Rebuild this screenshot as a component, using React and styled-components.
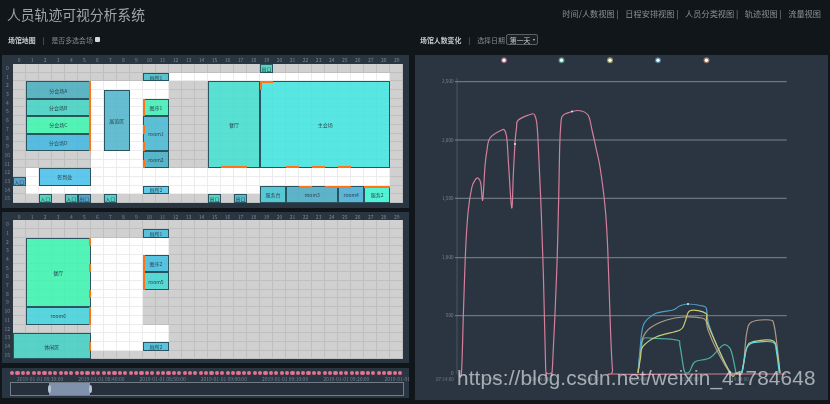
import React from "react";
import styled, { createGlobalStyle } from "styled-components";

const GlobalStyle = createGlobalStyle`
  html, body {
    margin: 0;
    padding: 0;
    background: #11161a;
  }
  * {
    box-sizing: border-box;
  }
`;

const Page = styled.div`
  width: 830px;
  height: 404px;
  overflow: hidden;
  background: #11161a;
  font-family: "Noto Sans CJK SC", "Liberation Sans", sans-serif;
  filter: blur(0.6px);
`;

const Header = styled.header`
  display: flex;
  justify-content: space-between;
  align-items: flex-start;
  height: 27px;
  padding: 4px 9px 0 7px;
`;

const Title = styled.h1`
  margin: 0;
  font-size: 13.8px;
  line-height: 21px;
  font-weight: 400;
  color: #a0a5a8;
`;

const Nav = styled.nav`
  display: flex;
  gap: 6.6px;
  padding-top: 1px;
  font-size: 8.2px;
  line-height: 16px;
  color: #8b9094;
`;

const Body = styled.div`
  display: grid;
  grid-template-columns: 415px 413px;
`;

const Column = styled.section`
  display: flex;
  flex-direction: column;
  padding-left: ${(p) => p.$inset || 0}px;
`;

const SubBar = styled.div`
  display: flex;
  align-items: center;
  height: 28px;
  padding: 0 0 3px ${(p) => p.$pad}px;
  font-size: 6.9px;
  color: #85898d;
`;

const SubTitle = styled.b`
  font-weight: 700;
  color: #c3c7ca;
`;

const Divider = styled.span`
  margin: 0 7px;
  color: #82878b;
`;

const Check = styled.span`
  width: 5px;
  height: 5px;
  margin-left: 2px;
  border-radius: 1px;
  background: #d6d9db;
`;

const DateSelect = styled.span`
  display: flex;
  align-items: center;
  gap: 3px;
  height: 11px;
  margin-left: 1px;
  padding: 0 2px 0 3px;
  border: 1px solid #5b6064;
  border-radius: 2px;
  background: #1b1f22;
  color: #c3c7ca;
  &::after {
    content: "";
    border: 1.5px solid transparent;
    border-top: 2px solid #ccc;
    border-bottom: 0;
  }
`;

const Panel = styled.div`
  width: 407px;
  padding-bottom: ${(p) => p.$bottom}px;
  margin-bottom: ${(p) => p.$gap}px;
  background: #2a3542;
`;

const Board = styled.div`
  display: grid;
  grid-template-columns: 10.7px 390.6px;
  grid-template-rows: ${(p) => p.$head}px 139px;
`;

const ColLabels = styled.div`
  grid-column: 2;
  grid-row: 1;
  display: grid;
  grid-template-columns: repeat(30, 1fr);
  font-size: 5px;
  line-height: 10px;
  text-align: center;
  color: #7b8794;
`;

const RowLabels = styled.div`
  grid-column: 1;
  grid-row: 2;
  display: grid;
  grid-template-rows: repeat(16, 1fr);
  font-size: 5px;
  line-height: 8.69px;
  text-align: center;
  color: #7b8794;
`;

const CellLayer = styled.div`
  grid-column: 2;
  grid-row: 2;
  display: grid;
  grid-template-columns: repeat(30, 1fr);
  grid-template-rows: repeat(16, 1fr);
`;

const Cell = styled.i`
  display: block;
  background: ${(p) => (p.$open ? "#ffffff" : "#d0d0d0")};
  border-right: 1px solid ${(p) => (p.$open ? "#ececec" : "#bfbfbf")};
  border-bottom: 1px solid ${(p) => (p.$open ? "#ececec" : "#bfbfbf")};
`;

const RoomLayer = styled(CellLayer)``;

const Room = styled.div`
  grid-column: ${(p) => p.$c + 1} / span ${(p) => p.$w};
  grid-row: ${(p) => p.$r + 1} / span ${(p) => p.$h};
  display: flex;
  align-items: center;
  justify-content: center;
  overflow: hidden;
  border: 1px solid #2a5560;
  background: ${(p) => p.$color};
  font-size: 5px;
  white-space: nowrap;
  color: #2a4650;
`;

const Door = styled.div`
  grid-column: ${(p) => p.$c + 1} / span ${(p) => p.$w || 1};
  grid-row: ${(p) => p.$r + 1} / span ${(p) => p.$h || 1};
  z-index: 1;
  background: #ff7414;
  ${(p) => p.$side === "right" && "justify-self: end; width: 2px;"}
  ${(p) => p.$side === "left" && "justify-self: start; width: 2px;"}
  ${(p) => p.$side === "top" && "align-self: start; height: 2px;"}
  ${(p) => p.$side === "bottom" && "align-self: end; height: 2px;"}
`;

const TimePanel = styled.div`
  width: 407px;
  height: 30px;
  padding: 3px 6px 0 8px;
  background: #2a3542;
`;

const Dots = styled.div`
  display: flex;
  justify-content: space-between;
  height: 5px;
`;

const Dot = styled.i`
  width: 4.2px;
  height: 4.2px;
  border-radius: 50%;
  background: #e8728e;
`;

const TimeLabels = styled.div`
  display: flex;
  gap: 15px;
  height: 6px;
  padding-left: 7px;
  font-size: 5px;
  line-height: 6px;
  white-space: nowrap;
  color: #75818e;
`;

const Track = styled.div`
  position: relative;
  width: 394px;
  height: 14px;
  border: 1px solid #727c88;
  background: #25303c;
`;

const Range = styled.div`
  position: absolute;
  left: 38px;
  top: 0;
  width: 41px;
  height: 12px;
  background: #7f91ab;
  &::before,
  &::after {
    content: "";
    position: absolute;
    top: 2px;
    width: 3px;
    height: 8px;
    border-radius: 50%;
    background: #b8c4d4;
  }
  &::before {
    left: -1.5px;
  }
  &::after {
    right: -1.5px;
  }
`;

const ChartPanel = styled.div`
  position: relative;
  width: 413px;
  height: 345px;
  background: #2a3541;
`;

const ChartSvg = styled.svg`
  display: block;
  width: 413px;
  height: 345px;
`;

const Watermark = styled.div`
  position: absolute;
  left: 42px;
  top: 311px;
  font-family: "Liberation Sans", sans-serif;
  font-size: 20.7px;
  line-height: 24px;
  letter-spacing: 0.18px;
  white-space: nowrap;
  color: rgba(224, 228, 232, 0.68);
`;

const COLS = Array.from({ length: 30 }, (_, i) => i);
const ROWS = Array.from({ length: 16 }, (_, i) => i);

// rooms let the map grid show through a little
const teal = (hex) => `${hex}d4`;

const floorOne = {
  head: 9,
  bottom: 5,
  gap: 4,
  open: [
    [12, 1, 17, 1],
    [6, 2, 6, 2],
    [6, 4, 4, 8],
    [1, 12, 28, 2],
    [1, 14, 18, 1],
  ],
  rooms: [
    ["分会场A", 1, 2, 5, 2, "#46b0c2"],
    ["分会场B", 1, 4, 5, 2, "#40d6c4"],
    ["分会场C", 1, 6, 5, 2, "#38fab0"],
    ["分会场D", 1, 8, 5, 2, "#40b8e4"],
    ["展览区", 7, 3, 2, 7, "#46b0c8"],
    ["厕所1", 10, 1, 2, 1, "#40c0ce"],
    ["图序1", 10, 4, 2, 2, "#3cf4b8"],
    ["room1", 10, 6, 2, 4, "#46bcd6"],
    ["room2", 10, 10, 2, 2, "#40aec6"],
    ["餐厅", 15, 2, 4, 10, "#40e4d2"],
    ["主会场", 19, 2, 10, 10, "#40eae6"],
    ["出口", 19, 0, 1, 1, "#40d6bc"],
    ["签到处", 2, 12, 4, 2, "#40bce8"],
    ["入口", 0, 13, 1, 1, "#4098c8"],
    ["入口", 2, 15, 1, 1, "#40d6b4"],
    ["入口", 4, 15, 1, 1, "#40c6bc"],
    ["出口", 5, 15, 1, 1, "#4098c8"],
    ["入口", 7, 15, 1, 1, "#40cec6"],
    ["出口", 15, 15, 1, 1, "#40d6bc"],
    ["出口", 17, 15, 1, 1, "#40b4c6"],
    ["厕所2", 10, 14, 2, 1, "#40c0e4"],
    ["服务台", 19, 14, 2, 2, "#40c6d6"],
    ["room3", 21, 14, 4, 2, "#46aec8"],
    ["room4", 25, 14, 2, 2, "#46b0da"],
    ["服务2", 27, 14, 2, 2, "#38fad6"],
  ],
  doors: [
    ["right", 5, 2, 1, 8],
    ["left", 10, 4, 1, 2],
    ["left", 10, 7, 1, 1],
    ["left", 10, 9, 1, 1],
    ["left", 10, 11, 1, 1],
    ["top", 19, 2, 1, 1],
    ["left", 19, 2, 1, 1],
    ["bottom", 16, 11, 2, 1],
    ["bottom", 21, 11, 1, 1],
    ["bottom", 23, 11, 1, 1],
    ["bottom", 25, 11, 1, 1],
    ["top", 22, 14, 1, 1],
    ["top", 24, 14, 2, 1],
    ["top", 27, 14, 2, 1],
  ],
};

const floorTwo = {
  head: 8.3,
  bottom: 3.7,
  gap: 5,
  open: [
    [6, 2, 6, 2],
    [6, 4, 4, 8],
    [6, 12, 6, 2],
    [6, 14, 4, 1],
  ],
  rooms: [
    ["厕所1", 10, 1, 2, 1, "#40bce0"],
    ["餐厅", 1, 2, 5, 8, "#38fab2"],
    ["room6", 1, 10, 5, 2, "#40d6e0"],
    ["休闲区", 0, 13, 6, 3, "#40d2c4"],
    ["图序2", 10, 4, 2, 2, "#40c0e4"],
    ["room5", 10, 6, 2, 2, "#40dad2"],
    ["厕所2", 10, 14, 2, 1, "#40c0e4"],
  ],
  doors: [
    ["right", 5, 2, 1, 1],
    ["right", 5, 5, 1, 1],
    ["right", 5, 8, 1, 1],
    ["right", 5, 10, 1, 2],
    ["right", 5, 14, 1, 1],
    ["left", 10, 4, 1, 4],
  ],
};

const isOpen = (open, c, r) =>
  open.some(([x, y, w, h]) => c >= x && c < x + w && r >= y && r < y + h);

const Floor = ({ data }) => (
  <Panel $bottom={data.bottom} $gap={data.gap}>
    <Board $head={data.head}>
      <ColLabels>
        {COLS.map((c) => (
          <span key={c}>{c}</span>
        ))}
      </ColLabels>
      <RowLabels>
        {ROWS.map((r) => (
          <span key={r}>{r}</span>
        ))}
      </RowLabels>
      <CellLayer>
        {ROWS.map((r) =>
          COLS.map((c) => <Cell key={`${r}-${c}`} $open={isOpen(data.open, c, r)} />)
        )}
      </CellLayer>
      <RoomLayer>
        {data.rooms.map(([name, c, r, w, h, color]) => (
          <Room key={`${name}-${c}-${r}`} $c={c} $r={r} $w={w} $h={h} $color={teal(color)}>
            {name}
          </Room>
        ))}
        {data.doors.map(([side, c, r, w, h]) => (
          <Door key={`${side}-${c}-${r}`} $side={side} $c={c} $r={r} $w={w} $h={h} />
        ))}
      </RoomLayer>
    </Board>
  </Panel>
);

// chart points are in page pixels, the svg viewBox starts at the panel corner
const smooth = (pts) => {
  let d = `M${pts[0][0]} ${pts[0][1]}`;
  for (let i = 0; i < pts.length - 1; i++) {
    const a = pts[i - 1] || pts[i];
    const b = pts[i];
    const c = pts[i + 1];
    const e = pts[i + 2] || c;
    const x1 = b[0] + (c[0] - a[0]) / 6;
    const y1 = b[1] + (c[1] - a[1]) / 6;
    const x2 = c[0] - (e[0] - b[0]) / 6;
    const y2 = c[1] - (e[1] - b[1]) / 6;
    d += ` C${x1.toFixed(1)} ${y1.toFixed(1)} ${x2.toFixed(1)} ${y2.toFixed(1)} ${c[0]} ${c[1]}`;
  }
  return d;
};

const pink = [
  [459, 374], [461.5, 372], [463.5, 310], [465.7, 248], [468.3, 210], [471.7, 188], [474.5, 181],
  [477.7, 178], [480.7, 183], [482.7, 200], [485, 166], [487, 150], [490, 138], [501.7, 130],
  [505, 131], [507, 140], [508.6, 165], [511.7, 208], [513.3, 175], [515, 143], [516.5, 128],
  [518.3, 120], [531.7, 114], [535, 116], [537, 125], [538.5, 150], [541, 206], [543.3, 272],
  [545.6, 366], [547, 373], [551, 373], [552.5, 366], [556.7, 272], [558.5, 206], [559.6, 150],
  [561, 122], [562.5, 116], [566, 113.5], [578, 110.5], [588, 115], [592, 130], [596, 148],
  [600, 167], [605, 206], [607.7, 248], [610.5, 330], [612.5, 370], [615, 374], [700, 374],
  [786, 374],
];
const blue = [
  [638, 373], [640, 350], [641.7, 333], [645, 322], [656.7, 313], [673, 310], [680, 305.7],
  [688, 304], [700, 305.5], [706, 307.5], [707.5, 318], [710, 328], [720, 353], [730, 371.7],
  [735, 373],
];
const peach = [
  [638, 373], [640.5, 350], [642.7, 338], [650, 328], [666.7, 320], [683, 317], [701.7, 318],
  [706, 321], [708, 330], [716.7, 350], [730, 372.7], [736, 373], [741.7, 373], [744, 360],
  [746.7, 333], [751.7, 322], [770, 320], [774, 325], [777, 345], [780, 373],
];
const yellow = [
  [638, 373], [640.5, 358], [642.7, 346.7], [656.7, 336.7], [680, 330], [685, 322], [690, 310.7],
  [706, 313.5], [708, 325], [730, 372.7], [736, 373], [741.7, 373], [746.7, 348], [753, 341.7],
  [773, 340.7], [777, 352], [780, 373],
];
const green = [
  [638, 373], [641, 350], [643.3, 339], [650, 338], [676.7, 340], [680, 346], [684, 370],
  [687, 373], [690, 371], [695, 361.7], [710, 357.7], [723.3, 345], [730, 348.3], [733, 358],
  [736, 373],
];
const cyan = [
  [741.7, 373], [744.5, 358], [746.7, 348], [753, 342.7], [773, 342.3], [776.5, 352], [779.3, 373],
];

const grid = [
  ["2,500", 81.7],
  ["2,000", 140],
  ["1,500", 198.3],
  ["1,000", 257.7],
  ["500", 315.7],
];

const legend = [
  [504, "#e88aa5"],
  [561.5, "#6fdcc0"],
  [610, "#e6e27c"],
  [658, "#6fb8e8"],
  [706.5, "#e8b08c"],
];

const axisTimes = [
  [445, "07:14:00"],
  [492, "08:24:00"],
  [540, "09:34:00"],
  [590, "10:44:00"],
  [640, "11:54:00"],
  [690, "13:04:00"],
  [740, "14:14:00"],
];

const Chart = () => (
  <ChartSvg viewBox="415 55 413 345">
    {legend.map(([x, color]) => (
      <g key={x}>
        <circle cx={x} cy={60.3} r={3} fill={color} opacity={0.55} />
        <circle cx={x} cy={60.3} r={1.7} fill="#ffffff" />
      </g>
    ))}
    <line x1={457} y1={78} x2={457} y2={374} stroke="#4c5763" strokeWidth={1} />
    {grid.map(([label, y]) => (
      <g key={label}>
        <line x1={455} y1={y} x2={786.7} y2={y} stroke="#7c858f" strokeWidth={1} />
        <text x={453.5} y={y + 1.5} fontSize={4.6} textAnchor="end" fill="#79838e">
          {label}
        </text>
      </g>
    ))}
    <text x={453.5} y={375} fontSize={4.6} textAnchor="end" fill="#79838e">
      0
    </text>
    {axisTimes.map(([x, label]) => (
      <text key={x} x={x} y={381} fontSize={4.6} textAnchor="middle" fill="#6f7a86">
        {label}
      </text>
    ))}
    <g fill="none" strokeWidth={1.2} strokeLinejoin="round">
      <path d={smooth(green)} stroke="#4fb09c" />
      <path d={smooth(peach)} stroke="#b09a86" />
      <path d={smooth(blue)} stroke="#4f9fc8" />
      <path d={smooth(yellow)} stroke="#c9c976" />
      <path d={smooth(cyan)} stroke="#5fd8e4" />
      <path d={smooth(pink)} stroke="#d47f9c" />
    </g>
    <circle cx={515} cy={144} r={0.9} fill="#f4f4f4" />
    <circle cx={572} cy={111.5} r={0.9} fill="#f4f4f4" />
    <circle cx={688} cy={304} r={0.9} fill="#f4f4f4" />
  </ChartSvg>
);

const timeLabels = [
  "2019-01-01 08:30:00",
  "2019-01-01 08:40:00",
  "2019-01-01 08:50:00",
  "2019-01-01 09:00:00",
  "2019-01-01 09:10:00",
  "2019-01-01 09:20:00",
  "2019-01-01",
];

const App = () => (
  <Page>
    <GlobalStyle />
    <Header>
      <Title>人员轨迹可视分析系统</Title>
      <Nav>
        <span>时间/人数视图 |</span>
        <span>日程安排视图 |</span>
        <span>人员分类视图 |</span>
        <span>轨迹视图 |</span>
        <span>流量视图</span>
      </Nav>
    </Header>
    <Body>
      <Column $inset={2}>
        <SubBar $pad={6}>
          <SubTitle>场馆地图</SubTitle>
          <Divider>|</Divider>
          <span>是否多选会场</span>
          <Check />
        </SubBar>
        <Floor data={floorOne} />
        <Floor data={floorTwo} />
        <TimePanel>
          <Dots>
            {Array.from({ length: 73 }, (_, i) => (
              <Dot key={i} />
            ))}
          </Dots>
          <TimeLabels>
            {timeLabels.map((t) => (
              <span key={t}>{t}</span>
            ))}
          </TimeLabels>
          <Track>
            <Range />
          </Track>
        </TimePanel>
      </Column>
      <Column>
        <SubBar $pad={5}>
          <SubTitle>场馆人数变化</SubTitle>
          <Divider>|</Divider>
          <span>选择日期</span>
          <DateSelect>第一天</DateSelect>
        </SubBar>
        <ChartPanel>
          <Chart />
          <Watermark>https://blog.csdn.net/weixin_41784648</Watermark>
        </ChartPanel>
      </Column>
    </Body>
  </Page>
);

export default App;
